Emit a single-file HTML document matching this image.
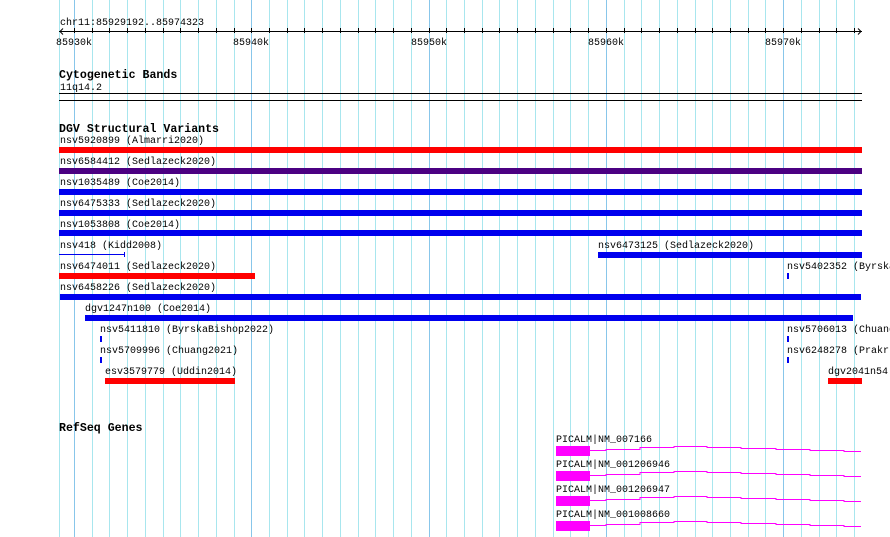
<!DOCTYPE html>
<html><head><meta charset="utf-8"><style>
html,body{margin:0;padding:0;background:#fff;width:890px;height:537px;overflow:hidden;position:relative}
.t{position:absolute;font-family:"Liberation Mono","DejaVu Sans Mono",monospace;font-size:10px;line-height:12px;color:#000;white-space:nowrap;margin-top:3px}
.h{font-weight:bold;font-size:11.6px}
.b{position:absolute;height:6px}
.r{background:#ff0000}.u{background:#0000ee}.p{background:#4b0082}
svg{position:absolute;left:0;top:0}
</style></head><body>
<svg width="890" height="537">
<g stroke="#a8e6ee" stroke-width="1">
<line x1="59.5" y1="0" x2="59.5" y2="537"/>
<line x1="92.5" y1="0" x2="92.5" y2="537"/><line x1="109.5" y1="0" x2="109.5" y2="537"/><line x1="127.5" y1="0" x2="127.5" y2="537"/><line x1="145.5" y1="0" x2="145.5" y2="537"/><line x1="163.5" y1="0" x2="163.5" y2="537"/><line x1="180.5" y1="0" x2="180.5" y2="537"/><line x1="198.5" y1="0" x2="198.5" y2="537"/><line x1="216.5" y1="0" x2="216.5" y2="537"/><line x1="234.5" y1="0" x2="234.5" y2="537"/>
<line x1="269.5" y1="0" x2="269.5" y2="537"/><line x1="287.5" y1="0" x2="287.5" y2="537"/><line x1="304.5" y1="0" x2="304.5" y2="537"/><line x1="322.5" y1="0" x2="322.5" y2="537"/><line x1="340.5" y1="0" x2="340.5" y2="537"/><line x1="358.5" y1="0" x2="358.5" y2="537"/><line x1="375.5" y1="0" x2="375.5" y2="537"/><line x1="393.5" y1="0" x2="393.5" y2="537"/><line x1="411.5" y1="0" x2="411.5" y2="537"/>
<line x1="446.5" y1="0" x2="446.5" y2="537"/><line x1="464.5" y1="0" x2="464.5" y2="537"/><line x1="482.5" y1="0" x2="482.5" y2="537"/><line x1="499.5" y1="0" x2="499.5" y2="537"/><line x1="517.5" y1="0" x2="517.5" y2="537"/><line x1="535.5" y1="0" x2="535.5" y2="537"/><line x1="553.5" y1="0" x2="553.5" y2="537"/><line x1="570.5" y1="0" x2="570.5" y2="537"/><line x1="588.5" y1="0" x2="588.5" y2="537"/>
<line x1="624.5" y1="0" x2="624.5" y2="537"/><line x1="641.5" y1="0" x2="641.5" y2="537"/><line x1="659.5" y1="0" x2="659.5" y2="537"/><line x1="677.5" y1="0" x2="677.5" y2="537"/><line x1="695.5" y1="0" x2="695.5" y2="537"/><line x1="712.5" y1="0" x2="712.5" y2="537"/><line x1="730.5" y1="0" x2="730.5" y2="537"/><line x1="748.5" y1="0" x2="748.5" y2="537"/><line x1="765.5" y1="0" x2="765.5" y2="537"/>
<line x1="801.5" y1="0" x2="801.5" y2="537"/><line x1="819.5" y1="0" x2="819.5" y2="537"/><line x1="836.5" y1="0" x2="836.5" y2="537"/><line x1="854.5" y1="0" x2="854.5" y2="537"/>
</g>
<g stroke="#88c6ea" stroke-width="1">
<line x1="74.5" y1="0" x2="74.5" y2="537"/><line x1="251.5" y1="0" x2="251.5" y2="537"/><line x1="429.5" y1="0" x2="429.5" y2="537"/><line x1="606.5" y1="0" x2="606.5" y2="537"/><line x1="783.5" y1="0" x2="783.5" y2="537"/>
</g>
<g stroke="#000" stroke-width="1" fill="none">
<line x1="59" y1="31.5" x2="862" y2="31.5"/>
<polyline points="63,28.5 60,31.5 63,34.5"/>
<polyline points="858,28.5 861,31.5 858,34.5"/>
<path d="M74.5 28v5M92.5 28v5M109.5 28v5M127.5 28v5M145.5 28v5M163.5 28v5M180.5 28v5M198.5 28v5M216.5 28v5M234.5 28v5M251.5 28v5M269.5 28v5M287.5 28v5M304.5 28v5M322.5 28v5M340.5 28v5M358.5 28v5M375.5 28v5M393.5 28v5M411.5 28v5M429.5 28v5M446.5 28v5M464.5 28v5M482.5 28v5M499.5 28v5M517.5 28v5M535.5 28v5M553.5 28v5M570.5 28v5M588.5 28v5M606.5 28v5M624.5 28v5M641.5 28v5M659.5 28v5M677.5 28v5M695.5 28v5M712.5 28v5M730.5 28v5M748.5 28v5M765.5 28v5M783.5 28v5M801.5 28v5M819.5 28v5M836.5 28v5M854.5 28v5"/>
<line x1="59" y1="93.5" x2="862" y2="93.5"/>
<line x1="59" y1="100.5" x2="862" y2="100.5"/>
</g>
<g stroke="#0000ee" stroke-width="1" fill="none">
<line x1="59" y1="254.5" x2="125" y2="254.5"/>
<line x1="124.5" y1="252" x2="124.5" y2="257"/>
</g>
<g stroke="#ff00ff" stroke-width="1" fill="none">
<polyline points="590,450.5 606,450.5 606,449.5 640,449.5 640,447.5 674,447.5 674,446.5 707,446.5 707,447.5 741,447.5 741,448.5 776,448.5 776,449.5 810,449.5 810,450.5 844,450.5 844,451.5 861,451.5"/>
<polyline transform="translate(0,25)" points="590,450.5 606,450.5 606,449.5 640,449.5 640,447.5 674,447.5 674,446.5 707,446.5 707,447.5 741,447.5 741,448.5 776,448.5 776,449.5 810,449.5 810,450.5 844,450.5 844,451.5 861,451.5"/>
<polyline transform="translate(0,50)" points="590,450.5 606,450.5 606,449.5 640,449.5 640,447.5 674,447.5 674,446.5 707,446.5 707,447.5 741,447.5 741,448.5 776,448.5 776,449.5 810,449.5 810,450.5 844,450.5 844,451.5 861,451.5"/>
<polyline transform="translate(0,75)" points="590,450.5 606,450.5 606,449.5 640,449.5 640,447.5 674,447.5 674,446.5 707,446.5 707,447.5 741,447.5 741,448.5 776,448.5 776,449.5 810,449.5 810,450.5 844,450.5 844,451.5 861,451.5"/>
</g>
<g fill="#ff00ff">
<rect x="556" y="446" width="34" height="10"/>
<rect x="556" y="471" width="34" height="10"/>
<rect x="556" y="496" width="34" height="10"/>
<rect x="556" y="521" width="34" height="10"/>
</g>
</svg>

<div class="t" style="left:60px;top:15px">chr11:85929192..85974323</div>
<div class="t" style="left:56px;top:35px">85930k</div>
<div class="t" style="left:233px;top:35px">85940k</div>
<div class="t" style="left:411px;top:35px">85950k</div>
<div class="t" style="left:588px;top:35px">85960k</div>
<div class="t" style="left:765px;top:35px">85970k</div>

<div class="t h" style="left:59px;top:67px">Cytogenetic Bands</div>
<div class="t" style="left:60px;top:80px">11q14.2</div>

<div class="t h" style="left:59px;top:121px">DGV Structural Variants</div>
<div class="t" style="left:60px;top:133px">nsv5920899 (Almarri2020)</div>
<div class="b r" style="left:59px;top:147px;width:803px"></div>
<div class="t" style="left:60px;top:154px">nsv6584412 (Sedlazeck2020)</div>
<div class="b p" style="left:59px;top:168px;width:803px"></div>
<div class="t" style="left:60px;top:175px">nsv1035489 (Coe2014)</div>
<div class="b u" style="left:59px;top:189px;width:803px"></div>
<div class="t" style="left:60px;top:196px">nsv6475333 (Sedlazeck2020)</div>
<div class="b u" style="left:59px;top:210px;width:803px"></div>
<div class="t" style="left:60px;top:217px">nsv1053808 (Coe2014)</div>
<div class="b u" style="left:59px;top:230px;width:803px"></div>
<div class="t" style="left:60px;top:238px">nsv418 (Kidd2008)</div>
<div class="t" style="left:598px;top:238px">nsv6473125 (Sedlazeck2020)</div>
<div class="b u" style="left:598px;top:252px;width:264px"></div>
<div class="t" style="left:60px;top:259px">nsv6474011 (Sedlazeck2020)</div>
<div class="b r" style="left:59px;top:273px;width:196px"></div>
<div class="t" style="left:787px;top:259px">nsv5402352 (Byrska</div>
<div class="b u" style="left:787px;top:273px;width:2px"></div>
<div class="t" style="left:60px;top:280px">nsv6458226 (Sedlazeck2020)</div>
<div class="b u" style="left:60px;top:294px;width:801px"></div>
<div class="t" style="left:85px;top:301px">dgv1247n100 (Coe2014)</div>
<div class="b u" style="left:85px;top:315px;width:768px"></div>
<div class="t" style="left:100px;top:322px">nsv5411810 (ByrskaBishop2022)</div>
<div class="b u" style="left:100px;top:336px;width:2px"></div>
<div class="t" style="left:787px;top:322px">nsv5706013 (Chuang</div>
<div class="b u" style="left:787px;top:336px;width:2px"></div>
<div class="t" style="left:100px;top:343px">nsv5709996 (Chuang2021)</div>
<div class="b u" style="left:100px;top:357px;width:2px"></div>
<div class="t" style="left:787px;top:343px">nsv6248278 (Prakr</div>
<div class="b u" style="left:787px;top:357px;width:2px"></div>
<div class="t" style="left:105px;top:364px">esv3579779 (Uddin2014)</div>
<div class="b r" style="left:105px;top:378px;width:130px"></div>
<div class="t" style="left:828px;top:364px">dgv2041n54</div>
<div class="b r" style="left:828px;top:378px;width:34px"></div>

<div class="t h" style="left:59px;top:420px">RefSeq Genes</div>
<div class="t" style="left:556px;top:432px">PICALM|NM_007166</div>
<div class="t" style="left:556px;top:457px">PICALM|NM_001206946</div>
<div class="t" style="left:556px;top:482px">PICALM|NM_001206947</div>
<div class="t" style="left:556px;top:507px">PICALM|NM_001008660</div>
</body></html>
